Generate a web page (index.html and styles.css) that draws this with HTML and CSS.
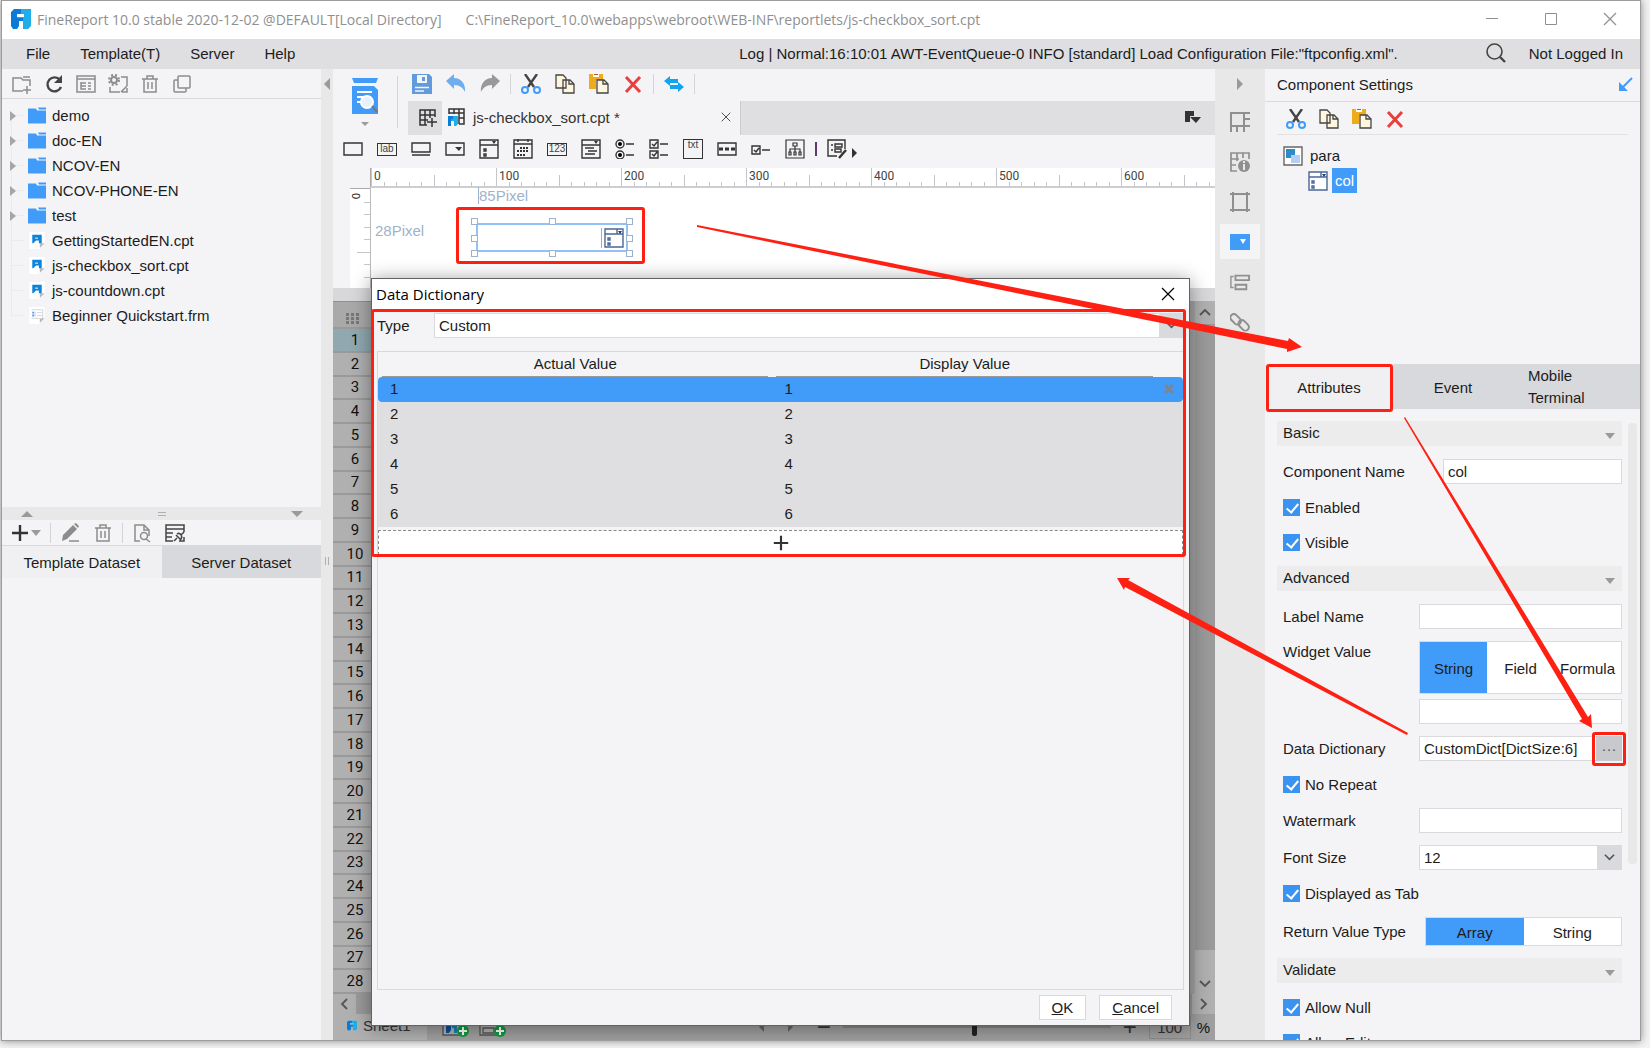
FILE: index.html
```html
<!DOCTYPE html>
<html lang="en">
<head>
  <meta charset="UTF-8">
  <title>FineReport 10.0</title>
  <link rel="stylesheet" href="styles.css">
</head>
<body>

<!-- icon set -->
<svg class="sprite" aria-hidden="true">
  <symbol id="i-logo" viewBox="0 0 20 20"><path fill="#0a7bd8" d="M0 3L3 0h7v5H6v15H2l-2-3z"/><path fill="#20aee8" d="M10 0h10v17l-3 3h-5V12H6V8h7V5h-3z"/><path fill="#0a7bd8" d="M6 9h6v3H8v5l-2 3H2z"/></symbol>
  <symbol id="i-newfolder" viewBox="0 0 20 20"><path fill="none" stroke="#8c8c8c" stroke-width="1.5" d="M11 17H1V4h8l2 2h7v6M11 3h7M15 12v8M11 16h8"/></symbol>
  <symbol id="i-refresh" viewBox="0 0 20 20"><path fill="none" stroke="#444" stroke-width="2.4" d="M16 6a7 7 0 1 0 1 7"/><path fill="#444" d="M18 1v8h-8z"/></symbol>
  <symbol id="i-listbox" viewBox="0 0 20 20"><path fill="none" stroke="#8c8c8c" stroke-width="1.5" d="M1 2h18v16H1zM1 5h18M5 8v7h5M5 9h5M5 12h5M12 9h3M12 12h3M12 15h3"/></symbol>
  <symbol id="i-gearbox" viewBox="0 0 20 20"><path fill="none" stroke="#8c8c8c" stroke-width="1.5" d="M13 3h6v9M2 13v5h10M19 12l-6 6M14 18h5v-4"/><circle cx="6" cy="6" r="3" fill="none" stroke="#8c8c8c" stroke-width="2"/><circle cx="6" cy="6" r="5" fill="none" stroke="#8c8c8c" stroke-width="2" stroke-dasharray="2 2"/></symbol>
  <symbol id="i-trash" viewBox="0 0 20 20"><path fill="none" stroke="#8c8c8c" stroke-width="1.5" d="M2 5h16M7 5V2h6v3M4 5v13h12V5M8 8v7M12 8v7"/></symbol>
  <symbol id="i-dup" viewBox="0 0 20 20"><path fill="none" stroke="#8c8c8c" stroke-width="1.5" d="M6 3q0-1 1-1h10q1 0 1 1v10q0 1-1 1H7q-1 0-1-1zM6 6H3q-1 0-1 1v10q0 1 1 1h10q1 0 1-1v-3"/></symbol>
  <symbol id="i-folder" viewBox="0 0 18 16"><path fill="#419bf9" d="M0 1h8l1 2h9v13H0z"/><path fill="#419bf9" d="M10 0h8v2h-7z"/></symbol>
  <symbol id="i-cpt" viewBox="0 0 16 18"><path fill="#fff" d="M0 0h16v12l-5 6H0z"/><path fill="#b9b9bb" d="M11 17v-5h5z"/><path fill="#0b84dc" d="M3 3h10v9h-3V9H7l-3 3H3z"/><path fill="#fff" d="M6 6h3v1H6z"/></symbol>
  <symbol id="i-frm" viewBox="0 0 16 18"><path fill="#fff" d="M0 0h16v12l-5 6H0z"/><path fill="#b9b9bb" d="M11 17v-5h5z"/><path fill="none" stroke="#cfd3d8" d="M2 3h12v9H2M6 5v5M8 6h5M8 9h5"/><path fill="#419bf9" d="M3 5h2v2H3zM3 8h2v2H3z"/></symbol>
  <symbol id="i-plus" viewBox="0 0 20 20"><path stroke="#333" stroke-width="2.4" d="M10 2v16M2 10h16"/></symbol>
  <symbol id="i-pencil" viewBox="0 0 20 20"><path fill="#8c8c8c" d="M2 18l1-6L13 2l4 4L7 16zM14 1l2-1 3 3-1 2z"/><path stroke="#8c8c8c" stroke-width="1.5" d="M9 18h10"/></symbol>
  <symbol id="i-pagefind" viewBox="0 0 20 20"><path fill="none" stroke="#8c8c8c" stroke-width="1.5" d="M8 18H3V2h9l5 5v6M12 2v5h5"/><circle cx="12" cy="13" r="3.5" fill="none" stroke="#8c8c8c" stroke-width="1.5"/><path stroke="#8c8c8c" stroke-width="1.5" d="M14 16l4 3"/></symbol>
  <symbol id="i-datalink" viewBox="0 0 20 20"><path fill="none" stroke="#444" stroke-width="1.5" d="M19 9V2H1v16h7M1 6h18M1 10h7M1 14h6"/><path fill="none" stroke="#444" stroke-width="1.5" d="M9 18l3-3M16 12l3-3M11 12l5 5M12 11c3-2 6 2 4 5M14 18h5v-4"/></symbol>
  <symbol id="i-preview" viewBox="0 0 26 36"><path fill="#419bf9" d="M0 0h26l-2 5H2zM0 8h22l4 4v24H0z"/><path stroke="#fff" stroke-width="2" d="M5 14h15M5 19h6M5 24h4"/><circle cx="15" cy="24" r="6" fill="#e8f0fa" stroke="#fff" stroke-width="2"/><path stroke="#777" stroke-width="2" d="M20 28l5 6"/></symbol>
  <symbol id="i-save" viewBox="0 0 20 20"><path fill="#629bdc" d="M0 0h17l3 3v17H0z"/><path fill="#f4f4f6" d="M5 1h10v8H5z"/><path fill="#629bdc" d="M10 3h3v4h-3z"/><path stroke="#f4f4f6" stroke-width="1.500" d="M3 13.500h14M3 17h9"/></symbol>
  <symbol id="i-undo" viewBox="0 0 20 20"><path fill="#6fadec" d="M0 7l8-7v4c7 0 12 6 11 14-2-4-5-7-11-7v4z"/></symbol>
  <symbol id="i-redo" viewBox="0 0 20 20"><path fill="#999" d="M20 7l-8-7v4C5 4 0 10 1 18c2-4 5-7 11-7v4z"/></symbol>
  <symbol id="i-cut" viewBox="0 0 20 20"><path stroke="#444" stroke-width="2.4" d="M4 0l9 13M16 0L7 13"/><circle cx="4" cy="16" r="3" fill="none" stroke="#419bf9" stroke-width="2"/><circle cx="16" cy="16" r="3" fill="none" stroke="#419bf9" stroke-width="2"/></symbol>
  <symbol id="i-copy" viewBox="0 0 20 20"><path fill="#fff6e0" stroke="#444" stroke-width="1.3" d="M1 1h7l3 3v10H1zM8 6h7l4 4v9H8z"/><path fill="none" stroke="#444" stroke-width="1.3" d="M14 6v4h5"/></symbol>
  <symbol id="i-paste" viewBox="0 0 20 20"><path fill="#eeab1c" d="M0 0h14v6H7v9H0z"/><path fill="#fff" d="M4 0h6v3H4z"/><path fill="#c0502b" d="M5 0h4v1H5z"/><path fill="#fff6e0" stroke="#444" stroke-width="1.3" d="M8 6h7l4 4v9H8z"/><path fill="none" stroke="#444" stroke-width="1.3" d="M14 6v4h5"/></symbol>
  <symbol id="i-delete" viewBox="0 0 20 20"><path stroke="#e8403c" stroke-width="3" d="M3 3l14 15M17 3L3 18"/></symbol>
  <symbol id="i-swap" viewBox="0 0 20 20"><path fill="#11a5f0" d="M0 7l6-5v3h8v4H6v3zM20 13l-6 5v-3H6v-4h8V8z"/></symbol>
  <symbol id="i-gridplus" viewBox="0 0 18 18"><path fill="none" stroke="#333" stroke-width="1.5" d="M8 16H1V1h15v7M1 6h15M1 11h8M6 1v15M11 1v8M13 9v9M8 13h10"/></symbol>
  <symbol id="i-gridfr" viewBox="0 0 18 18"><path fill="none" stroke="#333" stroke-width="1.5" d="M1 6V1h15v15h-5M1 5h15M6 1v5M11 1v15M11 10h5"/><path fill="#0a7bd8" d="M0 8h5v3H3v7H0z"/><path fill="#20aee8" d="M5 8h5v8l-2 2H6v-5H3v-2h2z"/></symbol>
  <symbol id="w-box" viewBox="0 0 20 20"><path fill="none" stroke="#333" stroke-width="1.4" d="M1 4h18v12H1z"/></symbol>
  <symbol id="w-button" viewBox="0 0 20 20"><path fill="none" stroke="#333" stroke-width="1.4" d="M1 4h18v9H1zM1 16h18"/></symbol>
  <symbol id="w-combo" viewBox="0 0 20 20"><path fill="none" stroke="#333" stroke-width="1.4" d="M1 4h18v12H1z"/><path fill="#333" d="M10 8h7l-3 4z"/></symbol>
  <symbol id="w-combocheck" viewBox="0 0 20 20"><path fill="none" stroke="#333" stroke-width="1.4" d="M1 1h18v18H1zM1 6h18M5 10h2v2H5zM5 15h2v2H5z"/><path fill="#333" d="M13 2h4l-2 3z"/></symbol>
  <symbol id="w-date" viewBox="0 0 20 20"><path fill="none" stroke="#333" stroke-width="1.4" d="M1 1h18v18H1zM1 5h18M5 0v3M15 0v3"/><path stroke="#333" stroke-width="2" stroke-dasharray="2 1" d="M7 9h9M4 12h12M4 16h9"/></symbol>
  <symbol id="w-tree" viewBox="0 0 20 20"><path fill="none" stroke="#333" stroke-width="1.4" d="M1 1h18v18H1zM1 6h18M4 9h9M7 12h9M4 15h10"/><path fill="#333" d="M13 2h4l-2 3z"/></symbol>
  <symbol id="w-radio" viewBox="0 0 20 20"><g fill="none" stroke="#333" stroke-width="1.4"><circle cx="5" cy="5" r="4"/><circle cx="5" cy="16" r="4"/><path d="M11 5h8M11 16h8"/></g><circle cx="5" cy="5" r="2"/><circle cx="5" cy="16" r="2"/></symbol>
  <symbol id="w-checks" viewBox="0 0 20 20"><path fill="none" stroke="#333" stroke-width="1.4" d="M1 1h8v8H1zM1 12h8v7H1zM11 5h8M11 16h8M3 5l2 2 3-4M3 15l2 2 3-4"/></symbol>
  <symbol id="w-pass" viewBox="0 0 20 20"><path fill="none" stroke="#333" stroke-width="1.4" d="M1 4h18v12H1z"/><path stroke="#333" stroke-width="3" stroke-dasharray="4 2" d="M2 10h16"/></symbol>
  <symbol id="w-check" viewBox="0 0 20 20"><path fill="none" stroke="#333" stroke-width="1.4" d="M1 7h8v8H1zM11 11h8M3 11l2 2 3-4"/></symbol>
  <symbol id="w-org" viewBox="0 0 20 20"><path fill="none" stroke="#333" stroke-width="1.2" d="M1 1h18v18H1zM8 4h4v3H8zM10 7v6M5 13v-3h10v3M4 13h2v3H4zM9 13h2v3H9zM14 13h2v3h-2z"/></symbol>
  <symbol id="w-edit" viewBox="0 0 20 20"><path fill="none" stroke="#333" stroke-width="1.4" d="M10 17H1V1h17v9M4 6h2M4 11h2M8 5h7v3H8zM8 10h6v3H8z"/><path stroke="#333" stroke-width="2.400" d="M12 19l7-8"/></symbol>
  <symbol id="i-widget" viewBox="0 0 20 20"><path fill="#fff" stroke="#4a6796" stroke-width="1.4" d="M1 1h18v18H1zM1 6h18M13 1v5M4 10h2v2H4zM4 15h2v2H4z"/><path fill="#1f3f78" d="M14 3h4l-2 3z"/></symbol>
  <symbol id="i-tabmenu" viewBox="0 0 16 14"><path fill="#333" d="M0 0h9v5H5v6H0zM5 6h11l-5 6z"/></symbol>
  <symbol id="r-cell" viewBox="0 0 20 20"><path fill="none" stroke="#8f8f8f" stroke-width="2" d="M1 20V1h19M1 14h19M14 1v19M14 7h6M7 14v6"/></symbol>
  <symbol id="r-info" viewBox="0 0 20 20"><path fill="none" stroke="#8f8f8f" stroke-width="1.700" d="M7 19H1V1h18v6M1 7h8M1 13h5M7 1v8M13 1v5"/><circle cx="14" cy="14" r="6" fill="#8f8f8f"/><path stroke="#e8e8e8" stroke-width="2" d="M14 9v2M14 12v6"/></symbol>
  <symbol id="r-float" viewBox="0 0 20 20"><path fill="none" stroke="#8f8f8f" stroke-width="2" d="M0 2h20M0 18h20M3 0v20M17 0v20"/></symbol>
  <symbol id="r-widget" viewBox="0 0 20 20"><path fill="#419bf9" d="M0 2h20v16H0z"/><path fill="#fff" d="M10 7h6l-3 5z"/></symbol>
  <symbol id="r-cond" viewBox="0 0 22 18"><path fill="none" stroke="#8f8f8f" stroke-width="2" d="M6 2h15v5H6zM6 12h12v5H6z"/><path fill="none" stroke="#8f8f8f" stroke-width="1.500" d="M4 3H1v12h3"/></symbol>
  <symbol id="r-link" viewBox="0 0 20 20"><g fill="none" stroke="#8f8f8f" stroke-width="2"><rect x="0" y="4" width="12" height="7" rx="3.500" transform="rotate(45 6 7)"/><rect x="8" y="10" width="12" height="7" rx="3.500" transform="rotate(45 14 13)"/></g></symbol>
  <symbol id="i-para" viewBox="0 0 20 20"><path fill="#fff" stroke="#666" stroke-width="1.4" d="M1 1h18v18H1z"/><path fill="#2d8cc8" d="M3 3h9v9H3z"/><path fill="#b5cff4" d="M8 9h9v8H8z"/></symbol>
  <symbol id="i-search" viewBox="0 0 20 20"><circle cx="8.500" cy="8.500" r="7.500" fill="none" stroke="#444" stroke-width="1.600"/><path stroke="#444" stroke-width="2.400" d="M14 14l5 5"/></symbol>
  <symbol id="i-popout" viewBox="0 0 14 14"><path stroke="#419bf9" stroke-width="2" d="M13 1L4 10"/><path fill="#419bf9" d="M0 5v9h9z"/></symbol>
  <symbol id="i-chev" viewBox="0 0 12 12"><path fill="none" stroke="#555" stroke-width="1.800" d="M1 3l5 5 5-5"/></symbol>
  <symbol id="i-sheet" viewBox="0 0 28 20"><path fill="#b0b0b0" stroke="#555" stroke-width="1.300" d="M1 1h17v16H1z"/><path fill="#0a4f98" d="M4 4h5v8l-2 3H4z"/><path fill="#1a80b8" d="M10 4h5v11h-3v-5h-2z"/><circle cx="21" cy="13" r="6" fill="#119c3e"/><path stroke="#fff" stroke-width="2" d="M21 9v8M17 13h8"/></symbol>
  <symbol id="i-form" viewBox="0 0 28 20"><path fill="#b0b0b0" stroke="#555" stroke-width="1.300" d="M1 1h17v16H1zM4 10h11v5H4z"/><circle cx="21" cy="13" r="6" fill="#119c3e"/><path stroke="#fff" stroke-width="2" d="M21 9v8M17 13h8"/></symbol>
  <symbol id="i-close" viewBox="0 0 14 14"><path stroke="currentColor" stroke-width="1.200" d="M1 1l12 12M13 1L1 13"/></symbol>
</svg>

<div class="window">
  <header class="titlebar">
    <svg class="icon"><use href="#i-logo"/></svg>
    <span>FineReport 10.0 stable 2020-12-02 @DEFAULT[Local Directory]</span>
    <span class="path">C:\FineReport_10.0\webapps\webroot\WEB-INF\reportlets/js-checkbox_sort.cpt</span>
    <div class="win-buttons">
      <button aria-label="Minimize"><svg width="14" height="14"><path stroke="currentColor" d="M1 6.500h12"/></svg></button>
      <button aria-label="Maximize"><svg width="14" height="14"><path fill="none" stroke="currentColor" d="M1.500 1.500h11v11h-11z"/></svg></button>
      <button aria-label="Close"><svg width="14" height="14"><use href="#i-close"/></svg></button>
    </div>
  </header>

  <nav class="menubar">
    <button>File</button>
    <button>Template(T)</button>
    <button>Server</button>
    <button>Help</button>
    <span class="log">Log | Normal:16:10:01 AWT-EventQueue-0 INFO [standard] Load Configuration File:"ftpconfig.xml".</span>
    <button class="search" aria-label="Search"><svg class="icon"><use href="#i-search"/></svg></button>
    <a href="#">Not Logged In</a>
  </nav>

  <div class="main">
    <!-- left: file tree + datasets -->
    <aside class="left">
      <div class="tools">
        <button aria-label="New folder"><svg class="icon"><use href="#i-newfolder"/></svg></button>
        <button aria-label="Refresh"><svg class="icon"><use href="#i-refresh"/></svg></button>
        <button aria-label="Open location"><svg class="icon"><use href="#i-listbox"/></svg></button>
        <button aria-label="Rename"><svg class="icon"><use href="#i-gearbox"/></svg></button>
        <button aria-label="Delete"><svg class="icon"><use href="#i-trash"/></svg></button>
        <button aria-label="Duplicate"><svg class="icon"><use href="#i-dup"/></svg></button>
      </div>
      <ul class="tree">
        <li class="dir"><svg class="ficon"><use href="#i-folder"/></svg>demo</li>
        <li class="dir"><svg class="ficon"><use href="#i-folder"/></svg>doc-EN</li>
        <li class="dir"><svg class="ficon"><use href="#i-folder"/></svg>NCOV-EN</li>
        <li class="dir"><svg class="ficon"><use href="#i-folder"/></svg>NCOV-PHONE-EN</li>
        <li class="dir"><svg class="ficon"><use href="#i-folder"/></svg>test</li>
        <li><svg class="ficon"><use href="#i-cpt"/></svg>GettingStartedEN.cpt</li>
        <li><svg class="ficon"><use href="#i-cpt"/></svg>js-checkbox_sort.cpt</li>
        <li><svg class="ficon"><use href="#i-cpt"/></svg>js-countdown.cpt</li>
        <li><svg class="ficon"><use href="#i-frm"/></svg>Beginner Quickstart.frm</li>
      </ul>
      <div class="split-h"><i class="tri up"></i><i class="grip"></i><i class="tri down"></i></div>
      <div class="tools data-tools">
        <button class="add" aria-label="Add dataset"><svg class="icon"><use href="#i-plus"/></svg><i class="tri small"></i></button>
        <i class="sep"></i>
        <button aria-label="Edit"><svg class="icon"><use href="#i-pencil"/></svg></button>
        <button aria-label="Delete"><svg class="icon"><use href="#i-trash"/></svg></button>
        <i class="sep"></i>
        <button aria-label="Preview"><svg class="icon"><use href="#i-pagefind"/></svg></button>
        <button aria-label="Connection"><svg class="icon"><use href="#i-datalink"/></svg></button>
      </div>
      <div class="data-tabs">
        <button class="on">Template Dataset</button>
        <button>Server Dataset</button>
      </div>
    </aside>

    <div class="split-v"><i class="tri left-tri"></i><i class="grip vert"></i></div>

    <!-- center: designer -->
    <section class="center">
      <div class="top">
        <button class="preview" aria-label="Preview"><svg width="26" height="36"><use href="#i-preview"/></svg><i class="tri small"></i></button>
        <i class="sep tall"></i>
        <div class="top-right">
          <div class="tools edit-tools">
            <button aria-label="Save"><svg class="icon"><use href="#i-save"/></svg></button>
            <button aria-label="Undo"><svg class="icon"><use href="#i-undo"/></svg></button>
            <button aria-label="Redo"><svg class="icon"><use href="#i-redo"/></svg></button>
            <i class="sep"></i>
            <button aria-label="Cut"><svg class="icon"><use href="#i-cut"/></svg></button>
            <button aria-label="Copy"><svg class="icon"><use href="#i-copy"/></svg></button>
            <button aria-label="Paste"><svg class="icon"><use href="#i-paste"/></svg></button>
            <button aria-label="Remove"><svg class="icon"><use href="#i-delete"/></svg></button>
            <i class="sep"></i>
            <button aria-label="Swap"><svg class="icon"><use href="#i-swap"/></svg></button>
            <i class="sep"></i>
          </div>
          <div class="file-tabs">
            <button class="new-tab" aria-label="New template"><svg width="18" height="18"><use href="#i-gridplus"/></svg></button>
            <div class="file-tab"><svg width="18" height="18"><use href="#i-gridfr"/></svg><span>js-checkbox_sort.cpt *</span>
              <button aria-label="Close tab"><svg width="10" height="10"><use href="#i-close"/></svg></button></div>
            <button class="tab-menu" aria-label="Tab list"><svg width="16" height="14"><use href="#i-tabmenu"/></svg></button>
          </div>
        </div>
      </div>

      <div class="tools widgets">
        <button aria-label="Text"><svg class="icon"><use href="#w-box"/></svg></button>
        <button class="glyph">lab</button>
        <button aria-label="Button"><svg class="icon"><use href="#w-button"/></svg></button>
        <button aria-label="Drop-down"><svg class="icon"><use href="#w-combo"/></svg></button>
        <button aria-label="Drop-down checkbox"><svg class="icon"><use href="#w-combocheck"/></svg></button>
        <button aria-label="Date"><svg class="icon"><use href="#w-date"/></svg></button>
        <button class="glyph">123</button>
        <button aria-label="Drop-down tree"><svg class="icon"><use href="#w-tree"/></svg></button>
        <button aria-label="Radio group"><svg class="icon"><use href="#w-radio"/></svg></button>
        <button aria-label="Checkbox group"><svg class="icon"><use href="#w-checks"/></svg></button>
        <button class="glyph big">txt</button>
        <button aria-label="Password"><svg class="icon"><use href="#w-pass"/></svg></button>
        <button aria-label="Checkbox"><svg class="icon"><use href="#w-check"/></svg></button>
        <button aria-label="View tree"><svg class="icon"><use href="#w-org"/></svg></button>
        <i class="sep dark"></i>
        <button aria-label="Custom"><svg class="icon"><use href="#w-edit"/></svg></button>
        <i class="tri more"></i>
      </div>

      <div class="design">
        <div class="ruler-x">
          <svg class="ticks" aria-hidden="true"><defs><pattern id="tx" width="125" height="20" patternUnits="userSpaceOnUse"><path stroke="#c4c6c9" d="M.500 0v20M13.500 14v6M25.500 14v6M38.500 14v6M50.500 14v6M63.500 7v13M75.500 14v6M88.500 14v6M100.500 14v6M113.500 14v6"/></pattern></defs><rect width="100%" height="20" fill="url(#tx)"/></svg>
          <div class="marks"><span>0</span><span>100</span><span>200</span><span>300</span><span>400</span><span>500</span><span>600</span></div>
        </div>
        <div class="ruler-y">
          <span>0</span>
          <svg class="ticks" aria-hidden="true"><defs><pattern id="ty" width="20" height="125" patternUnits="userSpaceOnUse"><path stroke="#c4c6c9" d="M14 13.500h6M14 25.500h6M14 38.500h6M14 50.500h6M7 63.500h13M14 75.500h6M14 88.500h6M14 100.500h6"/></pattern></defs><rect width="20" height="100%" fill="url(#ty)"/></svg>
        </div>
        <div class="canvas">
          <span class="dim-x">85Pixel</span>
          <span class="dim-y">28Pixel</span>
          <div class="placed">
            <svg class="icon"><use href="#i-widget"/></svg>
            <i class="h nw"></i><i class="h n"></i><i class="h ne"></i><i class="h w"></i><i class="h e"></i><i class="h sw"></i><i class="h s"></i><i class="h se"></i>
            <i class="mark"></i>
          </div>
        </div>
      </div>

      <!-- sheet behind the dialog -->
      <div class="sheet">
        <ol class="rows">
          <li class="corner"><svg width="14" height="11"><path stroke="#777" stroke-width="3" stroke-dasharray="3 2" d="M0 1.500h14M0 5.500h14M0 9.500h14"/></svg></li>
          <li class="on">1</li><li>2</li><li>3</li><li>4</li><li>5</li><li>6</li><li>7</li>
          <li>8</li><li>9</li><li>10</li><li>11</li><li>12</li><li>13</li><li>14</li>
          <li>15</li><li>16</li><li>17</li><li>18</li><li>19</li><li>20</li><li>21</li>
          <li>22</li><li>23</li><li>24</li><li>25</li><li>26</li><li>27</li><li>28</li>
        </ol>
        <div class="scroll-y">
          <svg class="chev up"><use href="#i-chev"/></svg>
          <i class="thumb"></i>
          <svg class="chev"><use href="#i-chev"/></svg>
        </div>
      </div>
      <div class="scroll-x"><svg class="chev lt"><use href="#i-chev"/></svg><i class="thumb"></i><svg class="chev rt"><use href="#i-chev"/></svg></div>
      <div class="sheetbar">
        <div class="sheet-tab"><svg width="10" height="11" viewBox="0 0 20 20"><use href="#i-logo"/></svg>Sheet1</div>
        <button aria-label="Add sheet"><svg width="28" height="20"><use href="#i-sheet"/></svg></button>
        <button aria-label="Add form"><svg width="28" height="20"><use href="#i-form"/></svg></button>
        <div class="zoom">
          <i class="tri left-tri"></i><i class="tri right-tri"></i>
          <span>&#8722;</span>
          <input type="range" aria-label="Zoom" min="0" max="200" value="98">
          <span>+</span>
          <input type="text" aria-label="Zoom percent" value="100">
          <b>%</b>
        </div>
      </div>
    </section>

    <nav class="strip">
      <i class="tri right-tri"></i>
      <button aria-label="Cell element"><svg class="icon"><use href="#r-cell"/></svg></button>
      <button aria-label="Cell attributes"><svg class="icon"><use href="#r-info"/></svg></button>
      <button aria-label="Float element"><svg class="icon"><use href="#r-float"/></svg></button>
      <button class="on" aria-label="Component settings"><svg class="icon"><use href="#r-widget"/></svg></button>
      <button aria-label="Condition attributes"><svg class="icon"><use href="#r-cond"/></svg></button>
      <button aria-label="Hyperlink"><svg class="icon"><use href="#r-link"/></svg></button>
    </nav>

    <!-- right: component settings -->
    <aside class="right">
      <div class="right-title"><span>Component Settings</span><svg width="14" height="14"><use href="#i-popout"/></svg></div>
      <div class="tools comp-tools">
        <button aria-label="Cut"><svg class="icon"><use href="#i-cut"/></svg></button>
        <button aria-label="Copy"><svg class="icon"><use href="#i-copy"/></svg></button>
        <button aria-label="Paste"><svg class="icon"><use href="#i-paste"/></svg></button>
        <button aria-label="Remove"><svg class="icon"><use href="#i-delete"/></svg></button>
      </div>
      <ul class="comp-tree">
        <li><svg class="icon"><use href="#i-para"/></svg><span>para</span></li>
        <li class="child"><svg class="icon"><use href="#i-widget"/></svg><span class="sel">col</span></li>
      </ul>
      <div class="attr-tabs">
        <button class="on">Attributes<i class="mark"></i></button>
        <button>Event</button>
        <button class="two">Mobile Terminal</button>
      </div>
      <div class="attr-body">
        <form class="attrs">
          <h3>Basic<i class="tri small"></i></h3>
          <div class="row"><label for="cname">Component Name</label><input class="short" type="text" id="cname" value="col"></div>
          <label class="check"><input type="checkbox" checked>Enabled</label>
          <label class="check"><input type="checkbox" checked>Visible</label>
          <h3>Advanced<i class="tri small"></i></h3>
          <div class="row"><label for="lname">Label Name</label><input type="text" id="lname"></div>
          <div class="row top-align">
            <label for="wvalue">Widget Value</label>
            <div class="stack">
              <div class="seg"><button type="button" class="on">String</button><button type="button">Field</button><button type="button">Formula</button></div>
              <input type="text" id="wvalue">
            </div>
          </div>
          <div class="row"><label for="dict">Data Dictionary</label>
            <div class="pick"><input type="text" id="dict" value="CustomDict[DictSize:6]"><button type="button">···<i class="mark"></i></button></div>
          </div>
          <label class="check"><input type="checkbox" checked>No Repeat</label>
          <div class="row"><label for="wmark">Watermark</label><input type="text" id="wmark"></div>
          <div class="row"><label for="fsize">Font Size</label>
            <div class="select"><select id="fsize"><option>12</option></select><svg class="chev"><use href="#i-chev"/></svg></div>
          </div>
          <label class="check"><input type="checkbox" checked>Displayed as Tab</label>
          <div class="row"><span>Return Value Type</span>
            <div class="seg flat"><button type="button" class="on">Array</button><button type="button">String</button></div>
          </div>
          <h3>Validate<i class="tri small"></i></h3>
          <label class="check"><input type="checkbox" checked>Allow Null</label>
          <label class="check"><input type="checkbox" checked>Allow Edit</label>
        </form>
        <i class="bar"></i>
      </div>
    </aside>
  </div>

  <!-- data dictionary dialog -->
  <div class="dialog" role="dialog" aria-label="Data Dictionary">
    <div class="dialog-title"><span>Data Dictionary</span><button aria-label="Close"><svg width="14" height="14"><use href="#i-close"/></svg></button></div>
    <div class="type-row">
      <label for="type">Type</label>
      <div class="select"><select id="type"><option>Custom</option></select><svg class="chev"><use href="#i-chev"/></svg></div>
    </div>
    <div class="dict">
      <table>
        <colgroup><col class="c-actual"><col><col class="c-del"></colgroup>
        <thead><tr><th><span>Actual Value</span></th><th><span>Display Value</span></th><th></th></tr></thead>
        <tbody>
          <tr class="on"><td>1</td><td>1</td><td><svg width="10" height="10"><path stroke="#7d868f" stroke-width="3" d="M1 1l8 8M9 1L1 9"/></svg></td></tr>
          <tr><td>2</td><td>2</td><td></td></tr>
          <tr><td>3</td><td>3</td><td></td></tr>
          <tr><td>4</td><td>4</td><td></td></tr>
          <tr><td>5</td><td>5</td><td></td></tr>
          <tr><td>6</td><td>6</td><td></td></tr>
        </tbody>
      </table>
      <button class="add-row" aria-label="Add row"><svg width="18" height="18" viewBox="0 0 20 20"><use href="#i-plus"/></svg></button>
    </div>
    <div class="dialog-foot"><button><u>O</u>K</button><button><u>C</u>ancel</button></div>
    <i class="mark"></i>
  </div>
</div>

<!-- arrows linking the steps -->
<svg class="arrows" aria-hidden="true">
  <path d="M697 225L1288 341L1289 338L1302 347L1287 352L1287 349L697 227z"/>
  <path d="M1405 417L1588 717L1591 714L1592 728L1579 721L1582 719L1404 418z"/>
  <path d="M1408 733L1128 580L1130 578L1117 578L1124 590L1125 587L1407 735z"/>
</svg>

</body>
</html>
```
FILE: styles.css
```css
* { box-sizing: border-box; }
body {
  margin: 0; height: 100vh; padding: 0 9px 7px 1px; overflow: hidden;
  background: #f3f3f3; color: #1c1c1c;
  font: 15px "Liberation Sans", Arial, sans-serif;
}
button, input, select { font: inherit; color: inherit; margin: 0; padding: 0; border: 0; background: none; border-radius: 0; }
button { cursor: pointer; }
ul, ol { list-style: none; margin: 0; padding: 0; }
svg { display: block; flex: none; }
.sprite { position: absolute; width: 0; height: 0; }
.icon { width: 20px; height: 20px; }
.chev { width: 12px; height: 12px; }
.up { transform: rotate(180deg); }
.lt { transform: rotate(90deg); }
.rt { transform: rotate(270deg); }

/* red highlight frames */
.mark { position: absolute; border: 3px solid #fe2013; border-radius: 3px; pointer-events: none; }
.arrows { position: fixed; inset: 0; width: 100%; height: 100%; fill: #fe2013; pointer-events: none; }

.tri { border: 5px solid transparent; border-top: 6px solid #9a9a9a; border-bottom: 0; flex: none; }
.tri.up { border-width: 0 6px 6px; border-bottom: 6px solid #9a9a9a; transform: none; }
.tri.down { border-left-width: 6px; border-right-width: 6px; }
.tri.left-tri { border: 6px solid transparent; border-right-color: #9a9a9a; border-left: 0; }
.tri.right-tri { border: 6px solid transparent; border-left-color: #9a9a9a; border-right: 0; }
.tri.more { border: 5px solid transparent; border-left-color: #333; border-right: 0; margin-top: 8px; }
.sep { width: 1px; height: 20px; background: #d4d4d6; flex: none; }
.sep.dark { width: 2px; height: 14px; background: #5d3a72; }
.grip { width: 8px; height: 4px; border: 1px solid #b0b0b0; border-width: 1px 0; }
.grip.vert { width: 4px; height: 8px; border-width: 0 1px; }

.window {
  position: relative; height: 100%; display: flex; flex-direction: column; overflow: hidden;
  border: 1px solid #9c9c9c; background: #f4f4f6; box-shadow: 0 0 8px #888;
}
.titlebar {
  height: 38px; flex: none; display: flex; align-items: center; padding: 0 0 2px 9px;
  background: #fff; color: #8f8f8f; font: 14px "Open Sans", sans-serif; white-space: nowrap;
}
.titlebar .icon { margin-right: 6px; }
.titlebar .path { margin-left: 24px; }
.win-buttons { margin-left: auto; display: flex; gap: 45px; padding-right: 23px; }
.win-buttons button { width: 14px; height: 14px; }
.menubar { height: 30px; flex: none; display: flex; align-items: center; padding: 0 17px 2px 24px; background: #dfdfe1; white-space: nowrap; }
.menubar button { margin-right: 30px; }
.menubar .log { margin-left: auto; margin-right: 88px; }
.menubar .search { margin: 0 23px 0 0; }
.menubar a { color: inherit; text-decoration: none; }
.main { flex: 1; min-height: 0; display: flex; }
.tools { display: flex; align-items: center; flex: none; }

/* left */
.left { width: 319px; flex: none; display: flex; flex-direction: column; }
.left > .tools { height: 30px; padding: 0 10px; gap: 12px; border-bottom: 1px solid #dadadc; }
.tree { flex: 1; padding-top: 4px; }
.tree li { display: flex; align-items: center; height: 25px; padding-left: 26px; position: relative; }
.tree li::after { content: ""; position: absolute; left: 9px; top: 12px; width: 12px; height: 25px; border: 1px solid #ebebed; border-width: 1px 0 0 1px; z-index: -1; }
.tree li:last-child::after { height: 1px; }
.tree .dir::before { content: ""; position: absolute; left: 8px; border: 5px solid transparent; border-left: 6px solid #a6a6a6; border-right: 0; }
.tree { position: relative; z-index: 0; }
.ficon { width: 18px; height: 17px; margin-right: 6px; }
.split-h { height: 13px; display: flex; align-items: center; justify-content: space-between; padding: 0 18px 0 19px; background: #e8e8e8; }
.left > .data-tools { height: 26px; gap: 13px; padding: 0 8px; }
.add { display: flex; align-items: center; gap: 1px; }
.left .data-tools .sep { margin: 0 -4px; }
.data-tabs { height: 494px; display: flex; align-items: flex-start; }
.data-tabs button { flex: 1; height: 32px; background: #d8d9dc; }
.data-tabs .on { background: #f0f0f3; }
.split-v { width: 12px; flex: none; display: flex; flex-direction: column; align-items: center; justify-content: space-between; padding: 9px 0 475px; background: #e8e8e8; }

/* center */
.center { flex: 1; min-width: 0; display: flex; flex-direction: column; }
.top { display: flex; height: 66px; flex: none; }
.preview { width: 64px; display: flex; flex-direction: column; align-items: center; gap: 8px; padding-top: 9px; }
.preview .tri { border-left-width: 4px; border-right-width: 4px; border-top-width: 4px; }
.sep.tall { height: 52px; margin: 7px 10px 0 0; }
.top-right { flex: 1; display: flex; flex-direction: column; }
.edit-tools { height: 32px; gap: 14px; padding: 0 0 2px 4px; }
.edit-tools .sep { margin: 0 -4px; }
.file-tabs { height: 34px; display: flex; align-items: center; background: #dfdfe1; }
.new-tab { width: 34px; display: flex; justify-content: flex-end; padding-right: 5px; }
.file-tab { width: 299px; height: 34px; display: flex; align-items: center; gap: 7px; padding: 0 9px 2px 6px; background: #f4f4f6; border-right: 1px solid #ccc; color: #333; }
.file-tab button { margin-left: auto; }
.tab-menu { margin: 0 14px 0 auto; }
.widgets { height: 33px; gap: 14px; padding: 0 0 5px 10px; }
.widgets .sep { margin: 0 -4px; }
.widgets .more { margin-left: -9px; }
.glyph { width: 20px; height: 13px; border: 1px solid #333; font-size: 10px; line-height: 10px; color: #444; }
.glyph.big { height: 20px; padding-bottom: 8px; }
.design { height: 120px; flex: none; display: grid; grid-template: 20px 1fr / 20px 1fr; padding-left: 17px; }
.ruler-x { grid-column: 2; position: relative; background: #fff; border-left: 1px solid #aaa; border-bottom: 2px solid #ccced1; overflow: hidden; }
.ticks { position: absolute; left: 0; top: 0; width: 100%; height: 100%; }
.marks { display: flex; font: 12px Roboto, sans-serif; color: #444; }
.marks span { width: 125px; flex: none; padding: 1px 0 0 3px; }
.ruler-y { position: relative; background: #fff; border-top: 1px solid #aaa; overflow: hidden; font-size: 11px; }
.ruler-y span { writing-mode: vertical-rl; }
.canvas { position: relative; background: #fff; border-left: 1px solid #bbb; color: #9db3cc; }
.dim-x { position: absolute; left: 107px; top: -1px; border-left: 1px solid #9db3cc; line-height: 17px; }
.dim-y { position: absolute; left: 0; top: 34px; padding-left: 4px; }
.placed { position: absolute; left: 105px; top: 35px; width: 152px; height: 29px; display: flex; justify-content: flex-end; align-items: center; border: 2px solid #92c1f8; }
.placed .icon { border-left: 1px solid #aaa; width: 25px; padding: 0 2px; }
.h { position: absolute; width: 7px; height: 7px; border: 1px solid #9db3cc; background: #fff; }
.nw, .n, .ne { top: -7px; }
.w, .e { top: 10px; }
.sw, .s, .se { bottom: -7px; }
.nw, .w, .sw { left: -7px; }
.n, .s { left: 71px; }
.ne, .e, .se { right: -7px; }
.placed .mark { inset: -18px -19px -14px -22px; }
.sheet { flex: 1; min-height: 0; display: flex; justify-content: space-between; border-top: 13px solid #d8d8db; background: #a4a4a4; }
.rows { width: 38px; display: flex; flex-direction: column; background: #b0b0b0; }
.rows li { flex: 1; min-height: 0; display: flex; align-items: center; justify-content: center; border-bottom: 2px solid #9a9a9a; padding-left: 6px; font: 15px Roboto, sans-serif; color: #111; }
.rows .corner { flex: 0 0 28px; background: #a9a9a9; border-top: 1px solid #909090; padding: 8px 0 0 2px; }
.rows .on { background: #91a8b0; }
.scroll-y { width: 20px; display: flex; flex-direction: column; align-items: center; gap: 6px; padding: 5px 0 4px; background: #b0b0b0; }
.scroll-y .thumb { flex: 1; width: 20px; background: #9a9a9a; margin-bottom: 22px; }
.scroll-x { height: 20px; flex: none; display: flex; align-items: center; gap: 6px; padding: 0 5px; background: #b0b0b0; }
.scroll-x .thumb { flex: 1; height: 20px; background: #9a9a9a; }
.sheetbar { height: 26px; flex: none; display: flex; align-items: flex-end; background: #9f9f9f; color: #333; }
.sheetbar button { height: 24px; margin-right: 9px; }
.sheet-tab { width: 94px; height: 26px; display: flex; align-items: center; gap: 6px; padding: 0 0 4px 14px; margin-right: 15px; background: #b0b0b0; }
.zoom { flex: 1; height: 26px; display: flex; align-items: center; justify-content: flex-end; gap: 12px; padding: 0 5px 0 0; }
.zoom .tri { margin-right: 12px; border-width: 5px; }
.zoom .tri.left-tri { border-left-width: 0; border-right-color: #666; }
.zoom .tri.right-tri { border-right-width: 0; border-left-color: #666; }
.zoom span { font-size: 24px; line-height: 20px; }
.zoom b { font-weight: normal; color: #111; margin-left: -6px; }
.zoom input[type="text"] { width: 42px; height: 24px; border: 1px solid #8b8b8b; text-align: center; }
.zoom input[type="range"] { appearance: none; width: 268px; height: 2px; background: #888; }
.zoom input[type="range"]::-webkit-slider-thumb { appearance: none; width: 5px; height: 18px; border-radius: 2px; background: #222; }

/* icon strip */
.strip { width: 50px; flex: none; display: flex; flex-direction: column; align-items: center; gap: 5px; background: #e8e8e8; padding-top: 9px; }
.strip .tri { margin-bottom: 9px; }
.strip button { width: 40px; height: 35px; display: flex; align-items: center; justify-content: center; }
.strip .on { background: #f4f4f6; }

/* component settings */
.right { width: 375px; flex: none; display: flex; flex-direction: column; }
.right-title { height: 33px; flex: none; display: flex; align-items: center; justify-content: space-between; padding: 0 7px 2px 12px; border-bottom: 1px solid #dadadc; }
.comp-tools { height: 33px; gap: 13px; margin: 0 12px; padding: 1px 0 0 9px; border-bottom: 1px solid #e2e2e4; }
.comp-tree { height: 229px; flex: none; padding: 8px 18px; }
.comp-tree li { display: flex; align-items: center; gap: 4px; height: 25px; }
.comp-tree .child { margin-left: 25px; }
.comp-tree span { padding: 0 3px; line-height: 25px; }
.sel { background: #419bf9; color: #fff; }
.attr-tabs { height: 45px; flex: none; display: grid; grid-template-columns: 128fr 120fr 127fr; background: #d8d9dd; }
.attr-tabs button { position: relative; padding-top: 2px; }
.attr-tabs .on { background: #f0f0f3; }
.attr-tabs .mark { inset: 0 0 -3px 1px; }
.attr-tabs .two { text-align: left; padding: 0 40px 0 15px; line-height: 22px; }
.attr-body { flex: 1; min-height: 0; overflow: hidden; display: flex; align-items: flex-start; gap: 6px; padding: 12px 3px 0 12px; }
.bar { width: 9px; height: 441px; margin-top: 2px; border-radius: 4px; background: #e8e8e8; }
.attrs { flex: 1; display: flex; flex-direction: column; gap: 12px; }
.attrs h3 { height: 25px; margin: 0 0 1px; padding: 0 7px 2px 6px; display: flex; align-items: center; justify-content: space-between; background: #ececec; font-weight: normal; font-size: 15px; }
.attrs .tri { margin-top: 6px; }
.row { display: flex; align-items: center; justify-content: space-between; padding-left: 6px; }
.row.top-align { align-items: flex-start; }
.row.top-align label { padding-top: 2px; }
.row > input, .stack, .pick, .row .select { width: 203px; }
.row > input.short { width: 179px; }
input[type="text"], select { height: 25px; border: 1px solid #dadadd; background: #fff; padding: 0 4px; }
.zoom input[type="text"] { background: none; }
.stack { display: flex; flex-direction: column; gap: 5px; }
.seg { height: 53px; display: flex; border: 1px solid #dadadd; background: #fff; }
.seg button { flex: 1; padding-top: 2px; }
.seg .on { background: #419bf9; }
.seg.flat { width: 197px; height: 29px; }
.pick { display: flex; }
.pick input { flex: 1; min-width: 0; border-right: 0; }
.pick button { position: relative; width: 26px; background: #c8c9cd; color: #555; }
.pick .mark { inset: -4px -4px -5px; }
.check { display: flex; align-items: center; gap: 5px; height: 23px; padding-left: 6px; }
.check input { appearance: none; width: 17px; height: 17px; background: #3a93f0; position: relative; }
.check input:checked::after { content: ""; position: absolute; left: 6px; top: 2px; width: 5px; height: 10px; border: solid #fff; border-width: 0 2px 2px 0; transform: rotate(40deg); }
.select { position: relative; display: flex; }
.select select { appearance: none; flex: 1; }
.select .chev { position: absolute; right: 0; top: 0; width: 25px; height: 25px; padding: 7px; background: #d9dadd; pointer-events: none; }

/* dialog */
.dialog {
  position: absolute; left: 369px; top: 277px; right: 450px; bottom: 14px;
  display: flex; flex-direction: column; padding: 0 5px;
  background: #f4f4f6; border: 1px solid #626262; box-shadow: 0 2px 18px rgba(0, 0, 0, .4);
}
.dialog > .mark { left: -1px; right: 3px; top: 30px; height: 248px; }
.dialog-title { height: 30px; flex: none; display: flex; align-items: center; justify-content: space-between; margin: 0 -5px; padding: 0 14px 0 4px; background: #fff; font: 15px "Open Sans", sans-serif; color: #000; }
.dialog-title button { width: 14px; height: 14px; }
.type-row { display: flex; align-items: center; margin: 4px 0 13px; }
.type-row label { width: 57px; }
.type-row .select { flex: 1; }
.dict { flex: 1; min-height: 0; border: 1px solid #d9d9dc; }
.dict table { width: 100%; border-collapse: separate; border-spacing: 0; table-layout: fixed; }
.c-actual { width: 49%; }
.c-del { width: 26px; }
.dict th { height: 25px; padding: 0; font-weight: normal; }
.dict th span { display: block; margin: 0 4px; line-height: 24px; border-bottom: 1px solid #9a9a9a; }
.dict td { height: 25px; padding: 0 0 2px 12px; background: #dfdfe1; }
.dict td:last-child { padding-left: 7px; }
.dict .on td { background: #419bf9; }
.dict .on td:first-child { border-radius: 4px 0 0 4px; }
.dict .on td:last-child { border-radius: 0 4px 4px 0; }
.add-row { width: 100%; height: 25px; margin-top: 3px; display: flex; align-items: center; justify-content: center; background: #fff; border: 1px dashed #888; }
.dialog-foot { height: 35px; flex: none; display: flex; justify-content: flex-end; gap: 13px; padding: 5px 12px; }
.dialog-foot button { height: 25px; padding: 0 12px; background: #fff; border: 1px solid #d9d9dc; }
```
